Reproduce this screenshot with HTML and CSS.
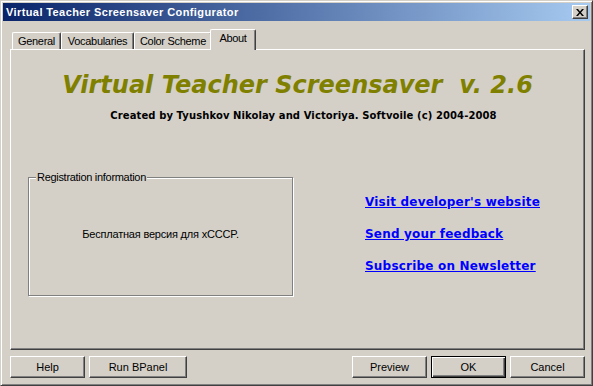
FILE: index.html
```html
<!DOCTYPE html>
<html lang="en">
<head>
  <meta charset="UTF-8">
  <title>Virtual Teacher Screensaver Configurator</title>
  <link rel="stylesheet" href="styles.css">
</head>
<body>
  <div class="window">
    <div class="titlebar">
      <span class="title">Virtual Teacher Screensaver Configurator</span>
      <span class="close">
        <svg width="8" height="7" viewBox="0 0 8 7"><path d="M0 0h2l2 2.5L6 0h2L5 3.5 8 7H6L4 4.5 2 7H0l3-3.5z" fill="#000"/></svg>
      </span>
    </div>

    <div class="client">
      <div class="tabs">
        <div class="tab t-general">General</div>
        <div class="tab t-vocab">Vocabularies</div>
        <div class="tab t-color">Color Scheme</div>
        <div class="tab t-about active">About</div>
      </div>

      <div class="panel">
        <h1 class="product">Virtual Teacher Screensaver&nbsp; v. 2.6</h1>
        <p class="credits">Created by Tyushkov Nikolay and Victoriya. Softvoile (c) 2004-2008</p>

        <div class="columns">
          <fieldset class="reg">
            <legend>Registration information</legend>
            <p>Бесплатная версия для xCCCP.</p>
          </fieldset>
          <div class="links">
            <a href="#">Visit developer's website</a>
            <a href="#">Send your feedback</a>
            <a href="#">Subscribe on Newsletter</a>
          </div>
        </div>
      </div>

      <div class="buttons">
        <button>Help</button>
        <button class="wide">Run BPanel</button>
        <span class="spacer"></span>
        <button>Preview</button>
        <button class="default">OK</button>
        <button>Cancel</button>
      </div>
    </div>
  </div>
</body>
</html>
```

FILE: styles.css
```css
body { margin: 0; background: #d4d0c8; font: 11px "Liberation Sans", Arial, sans-serif; color: #000; }

.window {
  width: 593px; height: 386px; box-sizing: border-box;
  border: 1px solid; border-color: #d4d0c8 #404040 #404040 #d4d0c8;
  box-shadow: inset 1px 1px #fff, inset -1px -1px #808080;
  padding: 2px; display: flex; flex-direction: column;
}

.titlebar {
  height: 18px; display: flex; align-items: center; justify-content: space-between;
  background: linear-gradient(to right, #0a246a, #a6caf0);
  padding: 0 2px 0 3px;
}
.title { color: #fff; font-weight: bold; font-size: 11px; letter-spacing: 0.4px; }
.close {
  width: 14px; height: 12px; background: #d4d0c8;
  display: flex; align-items: center; justify-content: center;
  border: 1px solid; border-color: #fff #404040 #404040 #fff;
  box-shadow: inset -1px -1px #808080;
}

.client { flex: 1; display: flex; flex-direction: column; padding: 8px 5px 5px 7px; }

.tabs { display: flex; align-items: flex-end; height: 20px; padding-left: 2px; position: relative; z-index: 1; }
.tab {
  height: 17px; box-sizing: border-box; padding: 2px 0 0; text-align: center; letter-spacing: -0.3px;
  border: 1px solid; border-color: #fff #404040 transparent #fff; border-bottom: none;
  box-shadow: inset -1px 0 #808080;
  border-radius: 2px 2px 0 0;
  background: #d4d0c8;
}
.t-general { width: 49px; }
.t-vocab { width: 73px; }
.t-color { width: 78px; }
.tab.active { width: 46px; height: 21px; margin: 0 -2px -1px -2px; z-index: 2; }

.panel {
  flex: 1; box-sizing: border-box;
  border: 1px solid; border-color: #fff #404040 #404040 #fff;
  box-shadow: inset -1px -1px #808080;
  padding: 0 8px;
}

.product {
  margin: 19px 0 0; text-align: center; color: #808000;
  font: italic bold 24px "DejaVu Sans", Verdana, sans-serif; line-height: 32px;
}
.credits {
  margin: 8px 0 0; padding-left: 12px; text-align: center;
  font: bold 10px "DejaVu Sans", Verdana, sans-serif; line-height: 13px; letter-spacing: 0.1px;
}

.columns { display: flex; align-items: flex-start; margin-top: 49px; }

.reg {
  width: 265px; height: 125px; box-sizing: border-box; margin: 0 0 0 9px; padding: 0 7px;
  border: 1px solid #808080; box-shadow: inset 1px 1px #fff, 1px 1px #fff;
}
.reg legend { padding: 0 1px; background: #d4d0c8; letter-spacing: -0.3px; }
.reg p { margin: 45px 0 0; text-align: center; letter-spacing: -0.2px; }

.links { display: flex; flex-direction: column; gap: 16px; margin: 23px 0 0 72px; }
.links a { color: #0000ff; font: bold 12px "DejaVu Sans", Verdana, sans-serif; line-height: 16px; letter-spacing: 0.2px; }

.buttons { display: flex; gap: 4px; margin-top: 6px; height: 22px; }
.buttons button {
  width: 75px; height: 22px; box-sizing: border-box;
  font: 11px "Liberation Sans", Arial, sans-serif; color: #000;
  background: #d4d0c8; border: 1px solid; border-color: #fff #404040 #404040 #fff;
  box-shadow: inset -1px -1px #808080; padding: 0;
}
.buttons button.wide { width: 98px; }
.buttons button.default { border: 1px solid #000; box-shadow: inset 1px 1px #fff, inset -1px -1px #404040, inset -2px -2px #808080; }
.spacer { flex: 1; }
```
